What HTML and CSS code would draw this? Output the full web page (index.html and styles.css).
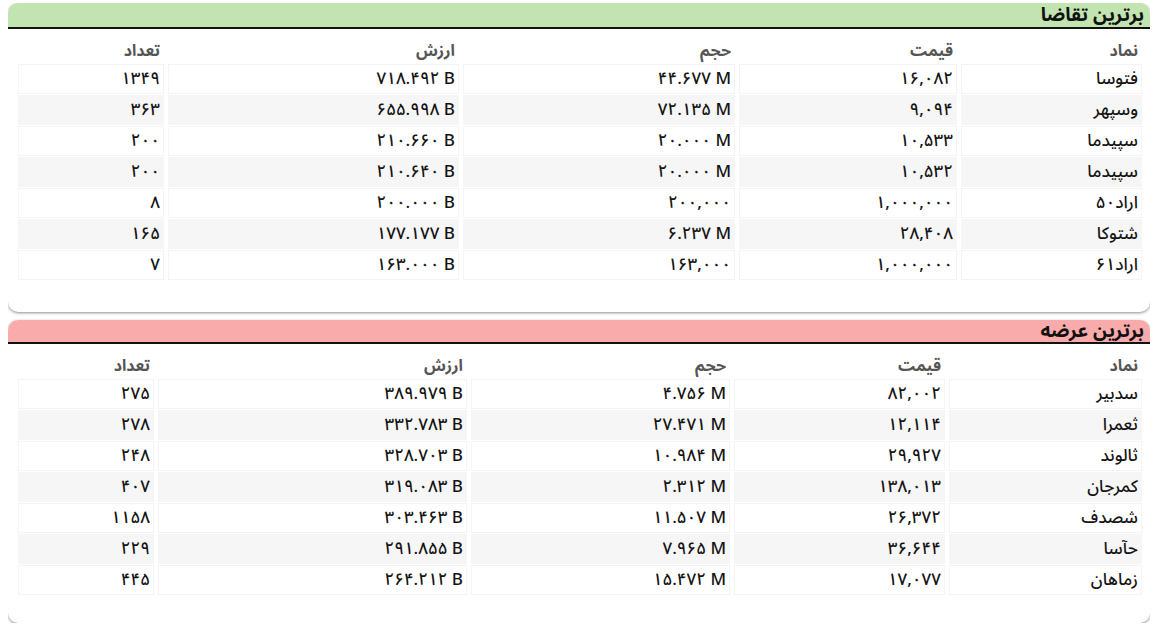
FILE: index.html
```html
<!DOCTYPE html>
<html lang="fa" dir="rtl">
<head>
<meta charset="utf-8">
<link rel="stylesheet" href="styles.css">
</head>
<body>
<section class="card">
  <div class="card-head demand">برترین تقاضا</div>
  <table class="grid t1">
    <thead>
      <tr><th class="c-name">نماد</th><th class="c-price">قیمت</th><th class="c-vol">حجم</th><th class="c-val">ارزش</th><th class="c-cnt">تعداد</th></tr>
    </thead>
    <tbody>
      <tr><td>فتوسا</td><td class="num">۱۶,۰۸۲</td><td class="num">۴۴.۶۷۷ M</td><td class="num">۷۱۸.۴۹۲ B</td><td class="num">۱۳۴۹</td></tr>
      <tr><td>وسپهر</td><td class="num">۹,۰۹۴</td><td class="num">۷۲.۱۳۵ M</td><td class="num">۶۵۵.۹۹۸ B</td><td class="num">۳۶۳</td></tr>
      <tr><td>سپیدما</td><td class="num">۱۰,۵۳۳</td><td class="num">۲۰.۰۰۰ M</td><td class="num">۲۱۰.۶۶۰ B</td><td class="num">۲۰۰</td></tr>
      <tr><td>سپیدما</td><td class="num">۱۰,۵۳۲</td><td class="num">۲۰.۰۰۰ M</td><td class="num">۲۱۰.۶۴۰ B</td><td class="num">۲۰۰</td></tr>
      <tr><td>اراد۵۰</td><td class="num">۱,۰۰۰,۰۰۰</td><td class="num">۲۰۰,۰۰۰</td><td class="num">۲۰۰.۰۰۰ B</td><td class="num">۸</td></tr>
      <tr><td>شتوکا</td><td class="num">۲۸,۴۰۸</td><td class="num">۶.۲۳۷ M</td><td class="num">۱۷۷.۱۷۷ B</td><td class="num">۱۶۵</td></tr>
      <tr><td>اراد۶۱</td><td class="num">۱,۰۰۰,۰۰۰</td><td class="num">۱۶۳,۰۰۰</td><td class="num">۱۶۳.۰۰۰ B</td><td class="num">۷</td></tr>
    </tbody>
  </table>
</section>
<section class="card card-2">
  <div class="card-head supply">برترین عرضه</div>
  <table class="grid t2">
    <thead>
      <tr><th class="c-name">نماد</th><th class="c-price">قیمت</th><th class="c-vol">حجم</th><th class="c-val">ارزش</th><th class="c-cnt">تعداد</th></tr>
    </thead>
    <tbody>
      <tr><td>سدبیر</td><td class="num">۸۲,۰۰۲</td><td class="num">۴.۷۵۶ M</td><td class="num">۳۸۹.۹۷۹ B</td><td class="num">۲۷۵</td></tr>
      <tr><td>ثعمرا</td><td class="num">۱۲,۱۱۴</td><td class="num">۲۷.۴۷۱ M</td><td class="num">۳۳۲.۷۸۳ B</td><td class="num">۲۷۸</td></tr>
      <tr><td>ثالوند</td><td class="num">۲۹,۹۲۷</td><td class="num">۱۰.۹۸۴ M</td><td class="num">۳۲۸.۷۰۳ B</td><td class="num">۲۴۸</td></tr>
      <tr><td>کمرجان</td><td class="num">۱۳۸,۰۱۳</td><td class="num">۲.۳۱۲ M</td><td class="num">۳۱۹.۰۸۳ B</td><td class="num">۴۰۷</td></tr>
      <tr><td>شصدف</td><td class="num">۲۶,۳۷۲</td><td class="num">۱۱.۵۰۷ M</td><td class="num">۳۰۳.۴۶۳ B</td><td class="num">۱۱۵۸</td></tr>
      <tr><td>حآسا</td><td class="num">۳۶,۶۴۴</td><td class="num">۷.۹۶۵ M</td><td class="num">۲۹۱.۸۵۵ B</td><td class="num">۲۲۹</td></tr>
      <tr><td>زماهان</td><td class="num">۱۷,۰۷۷</td><td class="num">۱۵.۴۷۲ M</td><td class="num">۲۶۴.۲۱۲ B</td><td class="num">۴۴۵</td></tr>
    </tbody>
  </table>
</section>
</body>
</html>
```

FILE: styles.css
```css
* { box-sizing: border-box; }
html, body { background: #ffffff; }
body {
  margin: 3px 8px 0 8px;
  font-family: "Noto Sans Arabic", "Vazirmatn", "DejaVu Sans", sans-serif;
  color: #222;
  display: flex;
  flex-direction: column;
  gap: 8px;
}
.card {
  background: #fff;
  border-radius: 10px;
  box-shadow: 0 1px 3px rgba(0,0,0,0.45);
  overflow: hidden;
  padding-bottom: 31px;
}
.card-2 { padding-bottom: 27px; }
.card-head {
  height: 26px;
  line-height: 24px;
  padding: 0 6px;
  font-size: 19px;
  font-weight: 700;
  color: #111;
  border-bottom: 2px solid #111;
  white-space: nowrap;
}
.card-head.demand { background: #c1e4b1; }
.card-head.supply { background: #f9aaaa; height: 24px; line-height: 22px; }
.grid {
  width: calc(100% - 10px);
  margin: 5px 4px 0 6px;
  border-collapse: separate;
  border-spacing: 4px 1px;
  table-layout: fixed;
}
.t2 { margin-top: 5px; }
.grid th, .grid td {
  height: 30px;
  padding: 0 3px;
  text-align: right;
  font-size: 17px;
  line-height: 20px;
  white-space: nowrap;
  vertical-align: middle;
}
.grid th {
  height: 28px;
  padding-bottom: 1px;
  vertical-align: bottom;
  color: #555;
  font-weight: 700;
  font-size: 16px;
  border: 1px solid transparent;
}
.t2 th { height: 28px; }
.grid td {
  color: #141414;
  font-weight: 500;
  border: 1px solid #f4f4f4;
}
.grid td.num { direction: ltr; text-align: right; }
.grid tbody tr:nth-child(even) td { background: #f6f6f6; border-color: #f6f6f6; }
.t1 .c-name { width: 181px; }
.t1 .c-price { width: 218px; }
.t1 .c-vol { width: 272px; }
.t1 .c-val { width: 291px; }
.t2 .c-name { width: 193px; }
.t2 .c-price { width: 211px; }
.t2 .c-vol { width: 259px; }
.t2 .c-val { width: 309px; }
```
